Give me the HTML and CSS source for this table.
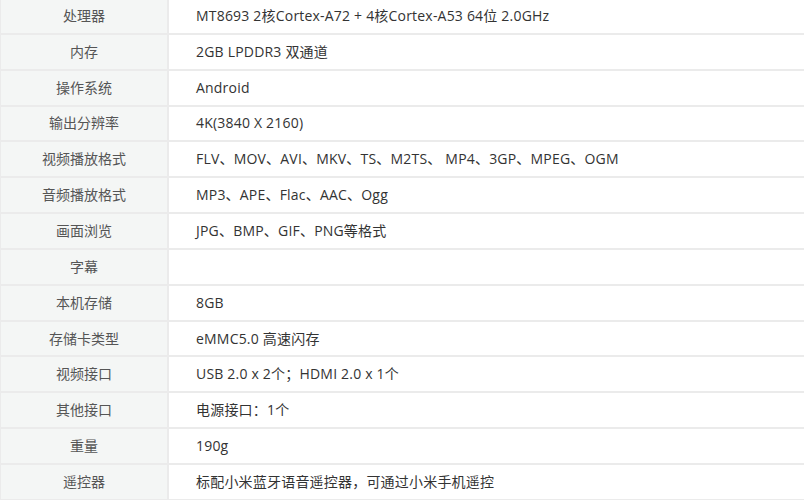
FILE: index.html
```html
<!DOCTYPE html>
<html>
<head>
  <meta charset="utf-8">
  <title>参数</title>
  <link rel="stylesheet" href="styles.css">
</head>
<body>
  <table class="spec">
    <tr><th>处理器</th><td>MT8693 2核Cortex-A72 + 4核Cortex-A53 64位 2.0GHz</td></tr>
    <tr><th>内存</th><td>2GB LPDDR3 双通道</td></tr>
    <tr><th>操作系统</th><td>Android</td></tr>
    <tr><th>输出分辨率</th><td>4K(3840 X 2160)</td></tr>
    <tr><th>视频播放格式</th><td>FLV、MOV、AVI、MKV、TS、M2TS、 MP4、3GP、MPEG、OGM</td></tr>
    <tr><th>音频播放格式</th><td>MP3、APE、Flac、AAC、Ogg</td></tr>
    <tr><th>画面浏览</th><td>JPG、BMP、GIF、PNG等格式</td></tr>
    <tr><th>字幕</th><td></td></tr>
    <tr><th>本机存储</th><td>8GB</td></tr>
    <tr><th>存储卡类型</th><td>eMMC5.0 高速闪存</td></tr>
    <tr><th>视频接口</th><td>USB 2.0 x 2个；HDMI 2.0 x 1个</td></tr>
    <tr><th>其他接口</th><td>电源接口：1个</td></tr>
    <tr><th>重量</th><td>190g</td></tr>
    <tr><th>遥控器</th><td>标配小米蓝牙语音遥控器，可通过小米手机遥控</td></tr>
  </table>
</body>
</html>
```

FILE: styles.css
```css
body {
  margin: 0;
  background: #fff;
  font-family: "Open Sans", "Noto Sans CJK SC", sans-serif;
  font-size: 14px;
  color: #333;
}

.spec {
  width: 804px;
  margin-top: -1px;
  border-collapse: collapse;
}

.spec th,
.spec td {
  height: 33.85px;
  padding: 0;
  border-bottom: 2px solid #ebebeb;
  font-weight: normal;
  line-height: 20px;
}

.spec th {
  width: 166px;
  background: #f4f6f5;
  border-left: 1px solid #ebebeb;
  border-right: 2px solid #ebebeb;
  color: #555;
  text-align: center;
}

.spec td {
  padding-left: 27px;
  text-align: left;
  letter-spacing: 0.2px;
}
```
